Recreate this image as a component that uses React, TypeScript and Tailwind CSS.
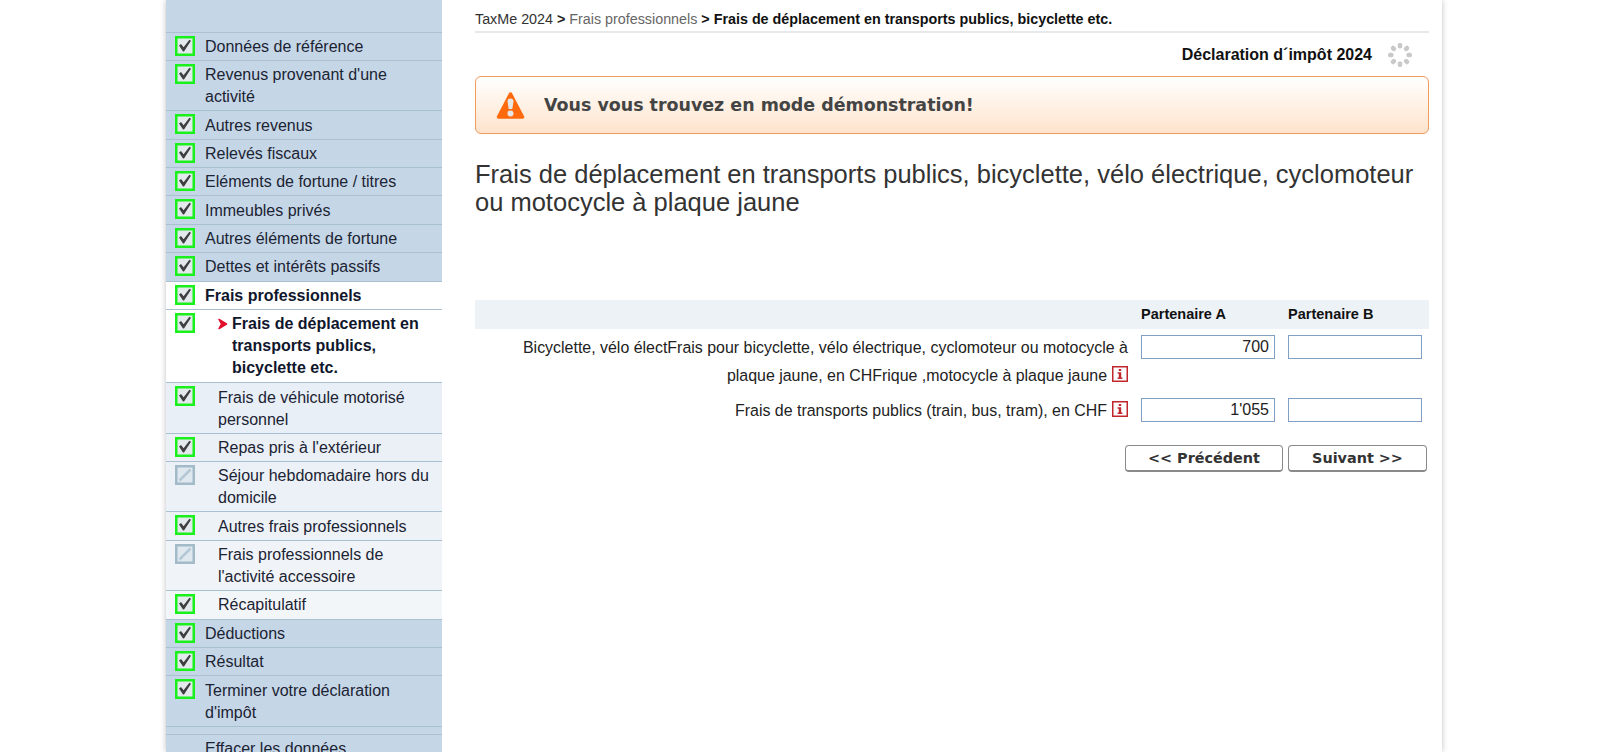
import { ReactNode } from 'react'

type NavItem = {
  label: ReactNode
  level: 'top' | 'section' | 'current' | 'sub'
  state?: 'done' | 'off'
  bg?: string
}

const navItems: NavItem[] = [
  { label: 'Données de référence', level: 'top' },
  { label: <>Revenus provenant d'une<br />activité</>, level: 'top' },
  { label: 'Autres revenus', level: 'top' },
  { label: 'Relevés fiscaux', level: 'top' },
  { label: 'Eléments de fortune / titres', level: 'top' },
  { label: 'Immeubles privés', level: 'top' },
  { label: 'Autres éléments de fortune', level: 'top' },
  { label: 'Dettes et intérêts passifs', level: 'top' },
  { label: 'Frais professionnels', level: 'section' },
  { label: <>Frais de déplacement en<br />transports publics,<br />bicyclette etc.</>, level: 'current' },
  { label: <>Frais de véhicule motorisé<br />personnel</>, level: 'sub', bg: 'bg-[#e8eff6]' },
  { label: "Repas pris à l'extérieur", level: 'sub', bg: 'bg-[#eaf0f6]' },
  { label: <>Séjour hebdomadaire hors du<br />domicile</>, level: 'sub', state: 'off', bg: 'bg-[#ebf1f6]' },
  { label: 'Autres frais professionnels', level: 'sub', bg: 'bg-[#edf2f7]' },
  { label: <>Frais professionnels de<br />l'activité accessoire</>, level: 'sub', state: 'off', bg: 'bg-[#f0f4f8]' },
  { label: 'Récapitulatif', level: 'sub', bg: 'bg-[#f3f6f9]' },
  { label: 'Déductions', level: 'top' },
  { label: 'Résultat', level: 'top' },
  { label: <>Terminer votre déclaration<br />d'impôt</>, level: 'top' },
]

function StatusBox({ state = 'done' }: { state?: 'done' | 'off' }) {
  if (state === 'off') {
    return (
      <svg width="20" height="20" viewBox="0 0 20 20" className="shrink-0 mt-[3px]">
        <rect x="1.25" y="1.25" width="17.5" height="17.5" fill="#dfe8ef" stroke="#a3bac9" strokeWidth="2.5" />
        <path d="M4.5 15.5 15.5 4.5" stroke="#b3c7d4" strokeWidth="2.5" />
      </svg>
    )
  }
  return (
    <svg width="20" height="20" viewBox="0 0 20 20" className="shrink-0 mt-[3px]">
      <rect x="1.25" y="1.25" width="17.5" height="17.5" fill="#e4e9ee" stroke="#19f01c" strokeWidth="2.5" />
      <path d="M4 9.5 6 8 8.6 11.2 14.4 3.8 16 4.8 9 15.5 8 15.5Z" fill="#3f3f3f" />
    </svg>
  )
}

function InfoIcon() {
  return (
    <svg width="16" height="16" viewBox="0 0 16 16" className="inline-block ml-[5px] align-[-1px]">
      <rect x="0.75" y="0.75" width="14.5" height="14.5" fill="#fff" stroke="#c0272d" strokeWidth="1.5" />
      <path d="M6.8 3h2.4v2H6.8ZM5.6 6.3h3.6v5.2h1.2V13H5.6v-1.5h1.2V7.8H5.6Z" fill="#c0272d" />
    </svg>
  )
}

function Spinner() {
  const dots = [0, 45, 90, 135, 180, 225, 270, 315]
  return (
    <svg width="26" height="26" viewBox="0 0 26 26" className="ml-[15px]">
      {dots.map((a) => (
        <rect key={a} x="10.75" y="1" width="4.5" height="5.5" rx="1.8" fill="#c9c9c9" transform={`rotate(${a} 13 13)`} />
      ))}
    </svg>
  )
}

function Sidebar() {
  return (
    <aside className="w-[276px] shrink-0 bg-[#c5d7e7] text-[16px] leading-[22px] text-[#1c2333]">
      <div className="h-[32.6px] border-b border-[#abc1d3]" />
      {navItems.map((item, i) => {
        const rowBg =
          item.level === 'top'
            ? 'bg-[#c5d7e7]'
            : item.level === 'section' || item.level === 'current'
              ? 'bg-white'
              : item.bg
        const textPad = item.level === 'top' || item.level === 'section' ? 'pl-[10px]' : 'pl-[23px]'
        return (
          <div key={i} className={`flex pl-[9px] border-b border-[#a9c0d1] ${item.level === 'current' ? 'pb-[3.2px]' : 'pb-[2.2px]'} ${rowBg}`}>
            <StatusBox state={item.state} />
            {item.level === 'current' ? (
              <div className="flex pl-[23px] pt-[3.2px] font-bold text-[#10162b]">
                <svg width="10" height="12" viewBox="0 0 10 12" className="mt-[5px] mr-[4px] shrink-0">
                  <path d="M1 1.5 8.5 6 1 10.5 3.5 6Z" fill="#e0102c" stroke="#e0102c" strokeWidth="1.5" strokeLinejoin="round" />
                </svg>
                <span>{item.label}</span>
              </div>
            ) : (
              <span className={`pt-[3.2px] ${textPad} ${item.level === 'section' ? 'font-bold text-[#10162b]' : ''}`}>{item.label}</span>
            )}
          </div>
        )
      })}
      <div className="h-[8px] border-b border-[#abc1d3]" />
      <div className="pl-[39px] pt-[3px]">Effacer les données</div>
    </aside>
  )
}

function MoneyInput({ value }: { value?: string }) {
  return (
    <input
      readOnly
      value={value ?? ''}
      className="w-[134px] h-[24px] border border-[#7f9fc4] bg-white px-[5px] text-right text-[16px] text-[#222] outline-none"
    />
  )
}

function NavButton({ children, className }: { children: ReactNode; className: string }) {
  return (
    <button className={`h-[27px] pt-[1px] rounded-[4px] border border-[#8a8a8a] border-b-2 bg-white font-['DejaVu_Sans',sans-serif] text-[14.4px] font-bold text-[#333] ${className}`}>
      {children}
    </button>
  )
}

export default function App() {
  return (
    <div className="h-[752px] overflow-hidden bg-white font-['Liberation_Sans',Arial,sans-serif]">
      <div className="ml-[166px] w-[1276px] h-full flex items-start bg-white shadow-[0_0_6px_rgba(0,0,0,0.25)]">
        <Sidebar />
        <main className="w-[954px] ml-[33px] shrink-0">
          <div className="h-[33px] border-b-2 border-[#e6e9ec] pt-[11px] text-[14.32px] leading-[17px] text-[#333]">
            TaxMe 2024 <b className="text-[#222]">&gt;</b> <span className="text-[#666]">Frais professionnels</span>{' '}
            <b className="text-[#111]">&gt; Frais de déplacement en transports publics, bicyclette etc.</b>
          </div>

          <div className="flex h-[43px] items-center justify-end pr-[16px] text-[16px] font-bold text-[#111]">
            Déclaration d´impôt 2024
            <Spinner />
          </div>

          <div className="flex h-[58px] items-center rounded-[6px] border border-[#f09a5b] bg-gradient-to-b from-white to-[#fde3cc] pl-[20px]">
            <svg width="29" height="29" viewBox="0 0 29 29">
              <path d="M14.5 3 26.5 26H2.5Z" fill="#ff6a0d" stroke="#ff6a0d" strokeWidth="3.5" strokeLinejoin="round" />
              <path d="M11.5 10.5a3 3 0 0 1 6 0L16.3 18h-3.6Z" fill="#e6e6e6" />
              <circle cx="14.5" cy="22.5" r="3" fill="#e6e6e6" />
            </svg>
            <span className="ml-[19px] pt-[1px] font-['DejaVu_Sans',sans-serif] text-[17.46px] font-bold text-[#444]">
              Vous vous trouvez en mode démonstration!
            </span>
          </div>

          <h1 className="mt-[26px] h-[57px] text-[25.5px] leading-[28px] text-[#333]">
            Frais de déplacement en transports publics, bicyclette, vélo électrique, cyclomoteur<br />
            ou motocycle à plaque jaune
          </h1>

          <div className="mt-[83px] grid grid-cols-[666px_147px_141px]">
            <div className="col-span-3 grid grid-cols-subgrid h-[29px] items-center bg-[#edf2f7] text-[14.5px] font-bold text-[#111]">
              <span />
              <span>Partenaire A</span>
              <span>Partenaire B</span>
            </div>

            <div className="mt-[5px] pr-[13px] text-right text-[15.95px] leading-[28px] text-[#222]">
              Bicyclette, vélo électFrais pour bicyclette, vélo électrique, cyclomoteur ou motocycle à<br />
              plaque jaune, en CHFrique ,motocycle à plaque jaune<InfoIcon />
            </div>
            <div className="mt-[6px]"><MoneyInput value="700" /></div>
            <div className="mt-[6px]"><MoneyInput /></div>

            <div className="mt-[7px] pr-[13px] text-right text-[15.95px] leading-[28px] text-[#222]">
              Frais de transports publics (train, bus, tram), en CHF<InfoIcon />
            </div>
            <div className="mt-[8px]"><MoneyInput value="1'055" /></div>
            <div className="mt-[8px]"><MoneyInput /></div>
          </div>

          <div className="mt-[20px] flex justify-end gap-[5px] pr-[2px]">
            <NavButton className="w-[158px]">&lt;&lt; Précédent</NavButton>
            <NavButton className="w-[139px]">Suivant &gt;&gt;</NavButton>
          </div>
        </main>
      </div>
    </div>
  )
}
